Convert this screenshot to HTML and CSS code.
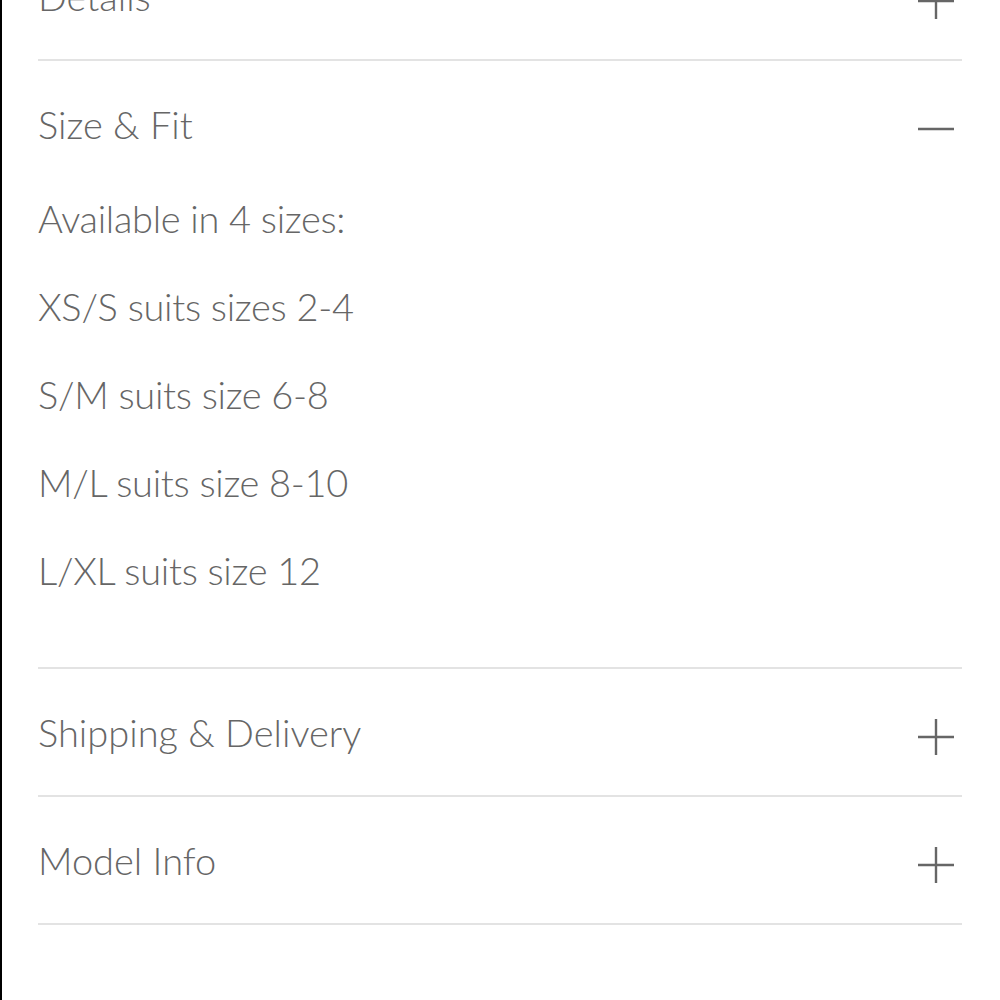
FILE: index.html
```html
<!DOCTYPE html>
<html>
<head>
<meta charset="utf-8">
<title>Size &amp; Fit</title>
<link rel="stylesheet" href="styles.css">
</head>
<body>
<div class="page">
	<div class="accordion">
		<div class="acc-item">
			<div class="acc-head">
				<span>Details</span>
				<svg class="acc-icon" viewBox="0 0 36 36"><path d="M0 18H36M18 0V36"/></svg>
			</div>
		</div>
		<div class="acc-item">
			<div class="acc-head">
				<span>Size &amp; Fit</span>
				<svg class="acc-icon" viewBox="0 0 36 36"><path d="M0 18H36"/></svg>
			</div>
			<div class="acc-body">
				<p>Available in 4 sizes:</p>
				<p>XS/S suits sizes 2-4</p>
				<p>S/M suits size 6-8</p>
				<p>M/L suits size 8-10</p>
				<p>L/XL suits size 12</p>
			</div>
		</div>
		<div class="acc-item">
			<div class="acc-head">
				<span>Shipping &amp; Delivery</span>
				<svg class="acc-icon" viewBox="0 0 36 36"><path d="M0 18H36M18 0V36"/></svg>
			</div>
		</div>
		<div class="acc-item">
			<div class="acc-head">
				<span>Model Info</span>
				<svg class="acc-icon" viewBox="0 0 36 36"><path d="M0 18H36M18 0V36"/></svg>
			</div>
		</div>
	</div>
</div>
</body>
</html>
```

FILE: styles.css
```css
body{
margin:0;
background:#fff;
color:#666;
font-family:Lato, "Liberation Sans", sans-serif;
font-weight:300;
font-size:38px;
overflow:hidden;
}
.page{
min-height:1100px;
border-left:2px solid #000;
}
.accordion{
margin:-67px 38px 0 36px;
}
.acc-item{
border-bottom:2px solid #e3e3e3;
}
.acc-head{
height:126px;
display:flex;
align-items:center;
justify-content:space-between;
}
.acc-icon{
width:36px;
height:36px;
margin:10px 8px 0 0;
stroke:#666;
stroke-width:2.4;
fill:none;
}
.acc-body{
display:flex;
flex-direction:column;
gap:42px;
padding:8px 0 74px;
}
.acc-body p{
margin:0;
line-height:46px;
letter-spacing:-0.3px;
}
```
